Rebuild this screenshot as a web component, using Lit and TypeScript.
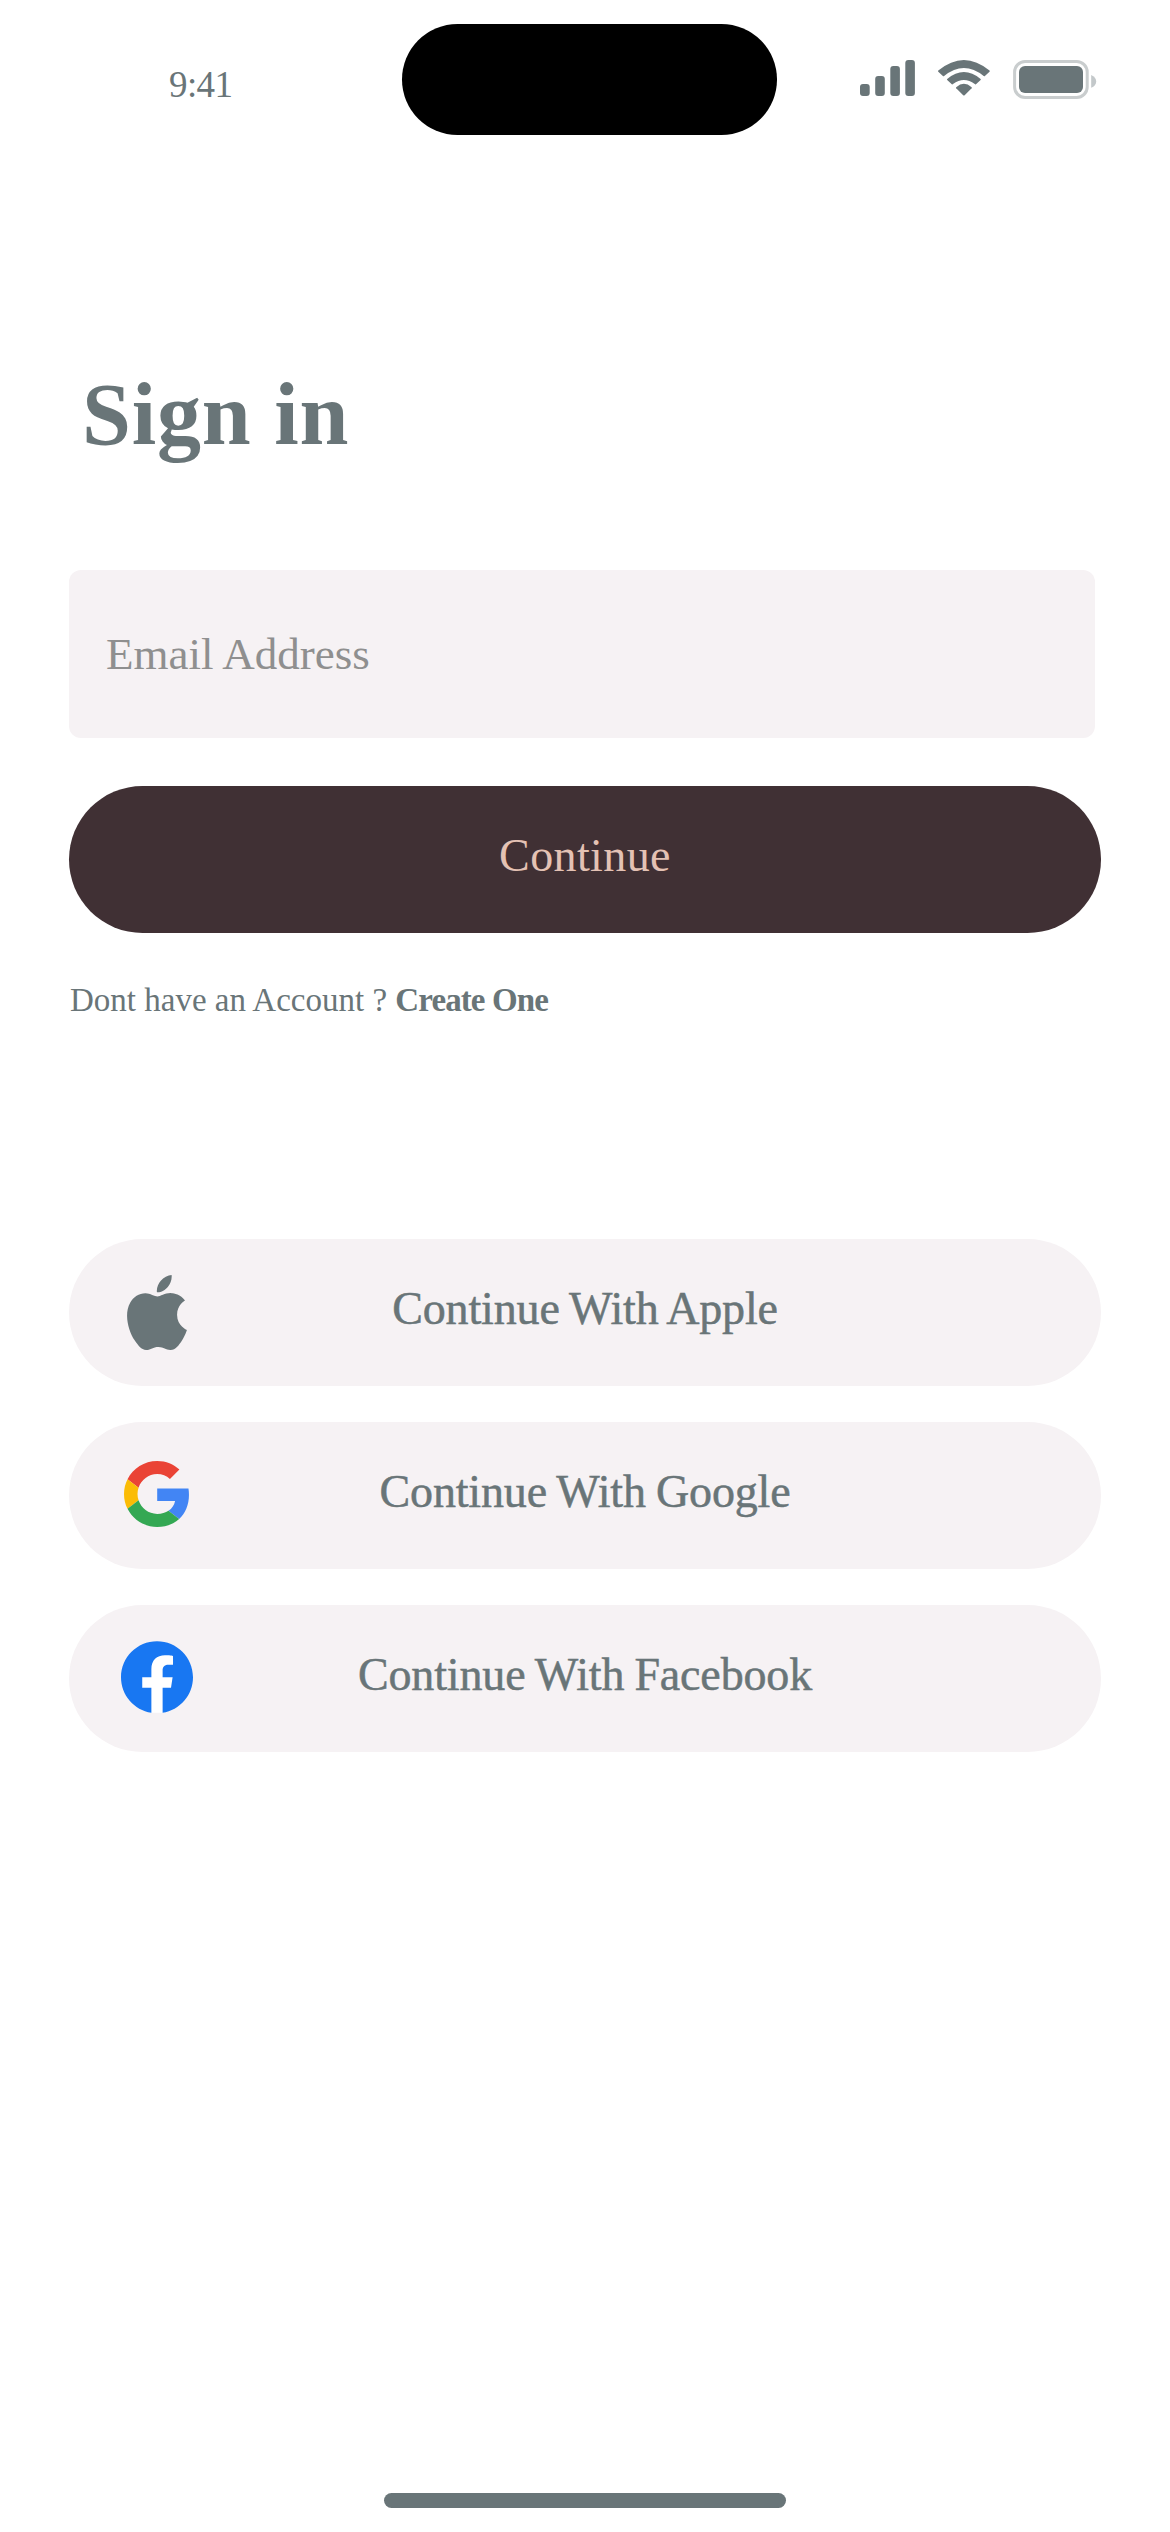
import { LitElement, html, css, svg } from "lit";
import { customElement, property } from "lit/decorators.js";

@customElement("status-bar")
class StatusBar extends LitElement {
  static styles = css`
    :host {
      display: block;
    }
    .bar {
      display: flex;
      align-items: flex-start;
      height: 150px;
    }
    .time {
      width: 232px;
      padding: 65px 0 0 169px;
      font-size: 37px;
      line-height: 40px;
      letter-spacing: -0.6px;
    }
    .island {
      width: 375px;
      height: 111px;
      margin-top: 24px;
      margin-left: 1px;
      border-radius: 56px;
      background: #000;
    }
    .icons {
      display: block;
      width: 240px;
      height: 44px;
      margin: 58px 0 0 81px;
    }
  `;

  render() {
    return html`
      <div class="bar">
        <div class="time">9:41</div>
        <div class="island"></div>
        <svg class="icons" viewBox="858 58 240 44" fill="#697578">
          <rect x="860" y="84" width="9.7" height="12" rx="3" />
          <rect x="875.2" y="76" width="9.6" height="20" rx="3" />
          <rect x="890.3" y="66" width="9.6" height="30" rx="3" />
          <rect x="905.3" y="60" width="9.6" height="36" rx="3" />
          <path d="M938.3 70.6Q963.9 49.4 989.5 70.6Q990 71.2 989.5 71.7L984.9 76.1Q984.3 76.5 983.7 76Q963.9 60 944.1 76Q943.5 76.5 942.9 76.1L938.3 71.7Q937.8 71.2 938.3 70.6Z" />
          <path d="M947.2 78.9Q963.9 65.1 980.6 78.9Q981.1 79.4 980.6 80L976 84.2Q975.4 84.6 974.8 84.1Q963.9 75.9 953 84.1Q952.4 84.6 951.8 84.2L947.2 80Q946.7 79.4 947.2 78.9Z" />
          <path d="M956.2 87.2Q963.9 80.4 971.6 87.2Q972.1 87.8 971.6 88.3L964.6 95.2Q963.9 95.8 963.2 95.2L956.2 88.3Q955.7 87.8 956.2 87.2Z" />
          <rect x="1014.6" y="61.5" width="72.6" height="36" rx="10.5" fill="none" stroke="#c9cdce" stroke-width="3" />
          <rect x="1019" y="66" width="64" height="27" rx="6" />
          <path d="M1091.2 75C1094.4 76.3 1096.2 78.8 1096.2 81.4S1094.4 86.6 1091.2 87.8Z" fill="#c3c8ca" />
        </svg>
      </div>
    `;
  }
}

const logos = {
  apple: svg`
    <svg width="60" height="75" viewBox="2.2 0 19.6 24" preserveAspectRatio="none">
      <path fill="#697578" d="M12.152 6.896c-.948 0-2.415-1.078-3.96-1.04-2.04.027-3.91 1.183-4.961 3.014-2.117 3.675-.546 9.103 1.519 12.09 1.013 1.454 2.208 3.09 3.792 3.039 1.52-.065 2.09-.987 3.935-.987 1.831 0 2.35.987 3.96.948 1.637-.026 2.676-1.48 3.676-2.948 1.156-1.688 1.636-3.325 1.662-3.415-.039-.013-3.182-1.221-3.22-4.857-.026-3.04 2.48-4.494 2.597-4.559-1.429-2.09-3.623-2.324-4.39-2.376-2-.156-3.675 1.09-4.61 1.09zM15.53 3.83c.843-1.012 1.4-2.427 1.245-3.83-1.207.052-2.662.805-3.532 1.818-.78.896-1.454 2.338-1.273 3.714 1.338.104 2.715-.688 3.559-1.701" />
    </svg>`,
  google: svg`
    <svg width="65" height="66" viewBox="0 0 47 48" preserveAspectRatio="none">
      <path fill="#ea4335" d="M24 9.5c3.54 0 6.71 1.22 9.21 3.6l6.85-6.85C35.9 2.38 30.47 0 24 0 14.62 0 6.51 5.38 2.56 13.22l7.98 6.19C12.43 13.72 17.74 9.5 24 9.5z" />
      <path fill="#4285f4" d="M46.98 24.55c0-1.57-.15-3.09-.38-4.55H24v9.02h12.94c-.58 2.96-2.26 5.48-4.78 7.18l7.73 6c4.51-4.18 7.09-10.36 7.09-17.65z" />
      <path fill="#fbbc05" d="M10.53 28.59c-.48-1.45-.76-2.99-.76-4.59s.27-3.14.76-4.59l-7.98-6.19C.92 16.46 0 20.12 0 24c0 3.88.92 7.54 2.56 10.78l7.97-6.19z" />
      <path fill="#34a853" d="M24 48c6.48 0 11.93-2.13 15.89-5.81l-7.73-6c-2.15 1.45-4.92 2.3-8.16 2.3-6.26 0-11.57-4.22-13.47-9.91l-7.98 6.19C6.51 42.62 14.62 48 24 48z" />
    </svg>`,
  facebook: svg`
    <svg width="72" height="72" viewBox="0 0 24 24">
      <path fill="#fff" d="M6.5 4h11.5v12h-3.5v7.95h-5V16h-3z" />
      <path fill="#1877f2" d="M24 12.073c0-6.627-5.373-12-12-12s-12 5.373-12 12c0 5.99 4.388 10.954 10.125 11.854v-8.385H7.078v-3.47h3.047V9.43c0-3.007 1.792-4.669 4.533-4.669 1.312 0 2.686.235 2.686.235v2.953H15.83c-1.491 0-1.956.925-1.956 1.874v2.25h3.328l-.532 3.47h-2.796v8.385C19.612 23.027 24 18.062 24 12.073z" />
    </svg>`,
};

type Provider = keyof typeof logos;

@customElement("provider-button")
class ProviderButton extends LitElement {
  @property() provider: Provider = "apple";
  @property() label = "";

  static styles = css`
    :host {
      display: block;
    }
    .button {
      display: grid;
      grid-template-columns: 1fr auto 1fr;
      align-items: center;
      box-sizing: border-box;
      width: 100%;
      height: 147px;
      padding: 0 52px;
      border: 0;
      border-radius: 74px;
      background: #f6f2f4;
      color: #697578;
      font-family: inherit;
      font-size: 46px;
    }
    .logo {
      display: flex;
      align-items: center;
      justify-content: center;
      width: 72px;
    }
    .logo.google,
    .logo.facebook {
      padding-bottom: 3px;
    }
    .logo.google {
      padding-right: 1px;
      width: 71px;
    }
    .label {
      padding-bottom: 8px;
      line-height: 56px;
      letter-spacing: -0.15px;
      word-spacing: -1.2px;
      white-space: nowrap;
      -webkit-text-stroke: 0.5px #697578;
    }
  `;

  render() {
    return html`
      <button class="button">
        <span class="logo ${this.provider}">${logos[this.provider]}</span>
        <span class="label">${this.label}</span>
      </button>
    `;
  }
}

@customElement("app-root")
class AppRoot extends LitElement {
  static styles = css`
    :host {
      display: block;
      color: #697578;
      font-family: "Liberation Serif", "Times New Roman", serif;
    }
    .screen {
      display: flex;
      flex-direction: column;
      box-sizing: border-box;
      width: 1170px;
      height: 2532px;
      background: #fff;
      overflow: hidden;
    }
    .content {
      display: flex;
      flex-direction: column;
      flex: 1;
      padding: 215px 69px 0;
    }
    .title {
      margin: 0 0 105px 13px;
      font-size: 88px;
      font-weight: 700;
      line-height: 100px;
      letter-spacing: 0.8px;
    }
    .field {
      box-sizing: border-box;
      width: 1026px;
      height: 168px;
      padding: 0 37px;
      border: 0;
      border-radius: 12px;
      background: #f6f2f4;
      color: #697578;
      font-family: inherit;
      font-size: 45px;
    }
    .field::placeholder {
      color: #8f8f8f;
      opacity: 1;
    }
    .submit {
      height: 147px;
      margin-top: 48px;
      padding: 0 0 8px;
      border: 0;
      border-radius: 74px;
      background: #403034;
      color: #e4c2b4;
      font-family: inherit;
      font-size: 46px;
      letter-spacing: 0.4px;
    }
    .signup {
      margin: 47px 0 0 1px;
      font-size: 33px;
      line-height: 40px;
    }
    .create {
      font-weight: 700;
      letter-spacing: -0.9px;
    }
    .providers {
      display: flex;
      flex-direction: column;
      gap: 36px;
      margin-top: 219px;
    }
    .home {
      align-self: center;
      width: 402px;
      height: 15px;
      margin-bottom: 24px;
      border-radius: 8px;
      background: #697578;
    }
  `;

  render() {
    return html`
      <div class="screen">
        <status-bar></status-bar>
        <main class="content">
          <h1 class="title">Sign in</h1>
          <input class="field" type="email" placeholder="Email Address" />
          <button class="submit">Continue</button>
          <div class="signup">Dont have an Account ? <span class="create">Create One</span></div>
          <div class="providers">
            <provider-button provider="apple" label="Continue With Apple"></provider-button>
            <provider-button provider="google" label="Continue With Google"></provider-button>
            <provider-button provider="facebook" label="Continue With Facebook"></provider-button>
          </div>
        </main>
        <div class="home"></div>
      </div>
    `;
  }
}
